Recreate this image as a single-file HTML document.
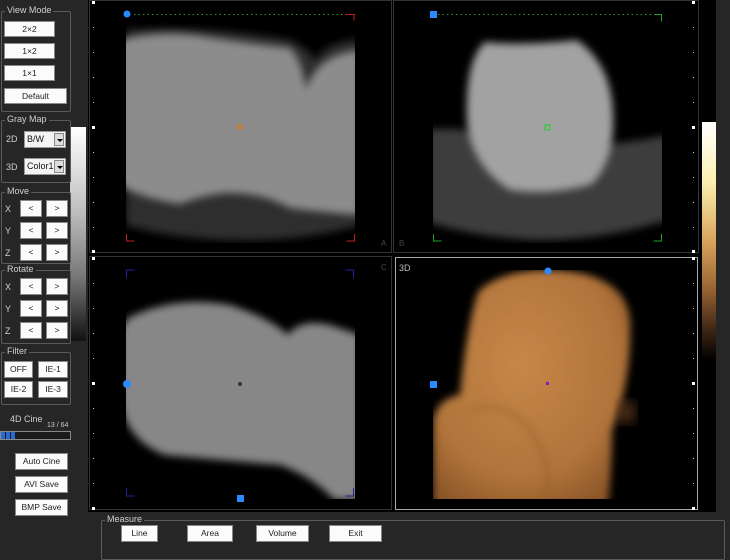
<!DOCTYPE html>
<html><head><meta charset="utf-8"><style>
*{margin:0;padding:0;box-sizing:border-box}
body{width:730px;height:546px;background:#262626;position:relative;overflow:hidden;font-family:"Liberation Sans",sans-serif;font-size:9px;color:#d8d8d8}
.a{position:absolute}
.fs{position:absolute;border:1px solid #5a5a5a;border-radius:2px}
.lg{position:absolute;top:-7px;left:3px;background:#262626;padding:0 2px;font-size:9px;color:#d0d0d0}
.b{position:absolute;background:#fbfbfb;border:1px solid #888;color:#222;font-size:8.5px;text-align:center;line-height:14px}
.sel{position:absolute;background:#f4f4f4;border:1px solid #999;color:#111;font-size:9px;line-height:15px;padding-left:2px}
.sel i{position:absolute;right:1px;top:1px;width:10px;height:13px;background:#ddd;border:1px solid #888}
.sel i:after{content:"";position:absolute;left:2px;top:5px;border:3px solid transparent;border-top:3px solid #000}
.lbl{position:absolute;font-size:9px;color:#cfcfcf}
</style></head><body>
<div class="a" style="left:88px;top:0;width:628px;height:512px;background:#000"></div>
<div class="a" style="left:702px;top:122px;width:14px;height:238px;background:linear-gradient(#fff 0%,#fbf0b0 25%,#d9a45c 50%,#9a6432 70%,#3a2414 88%,#000 100%)"></div>
<div class="a" style="left:70px;top:127px;width:16px;height:214px;background:linear-gradient(#fff,#bdbdbd 40%,#777 70%,#111)"></div>

<svg class="a" style="left:0;top:0" width="730" height="546">
<defs>
<filter id="bl" x="-10%" y="-10%" width="120%" height="120%"><feGaussianBlur stdDeviation="4"/></filter>
<filter id="bl2"><feGaussianBlur stdDeviation="6"/></filter>
<radialGradient id="og" cx="0.45" cy="0.4" r="0.7"><stop offset="0" stop-color="#c68848"/><stop offset="0.7" stop-color="#b0733a"/><stop offset="1" stop-color="#8a5528"/></radialGradient>
<clipPath id="c1"><rect x="126" y="14" width="229" height="229"/></clipPath>
<clipPath id="c2"><rect x="433" y="14" width="229" height="229"/></clipPath>
<clipPath id="c3"><rect x="126" y="270" width="229" height="229"/></clipPath>
<clipPath id="c4"><rect x="433" y="270" width="229" height="229"/></clipPath>
</defs>
<rect x="89.5" y="0.5" width="302" height="252" fill="none" stroke="#333"/>
<rect x="393.5" y="0.5" width="305" height="252" fill="none" stroke="#333"/>
<rect x="89.5" y="256.5" width="302" height="253" fill="none" stroke="#333"/>
<rect x="395.5" y="257.5" width="302" height="252" fill="none" stroke="#aaa"/>

<g clip-path="url(#c1)">
<path d="M126 30 Q200 25 290 40 Q310 50 315 60 Q330 40 360 40 L360 225 Q300 242 230 240 Q170 238 126 225Z" fill="#2e2e2e" filter="url(#bl)"/>
<path d="M120 40 Q160 30 200 36 Q250 44 290 48 Q302 60 306 90 Q316 55 360 50 L360 215 Q320 212 290 208 Q260 192 225 193 Q200 196 180 204 Q140 198 120 185Z" fill="#8c8c8c" filter="url(#bl)"/>
</g>
<circle cx="240" cy="127" r="3" fill="#c08040"/>
<line x1="134" y1="14.5" x2="355" y2="14.5" stroke="#2a9a2a" stroke-dasharray="1.5 3"/>
<circle cx="127" cy="14" r="3.5" fill="#2a8aff"/>
<path d="M345 14.5h9v6M126.5 234v7h8M354.5 234v7h-8" stroke="#c02020" fill="none"/>

<g clip-path="url(#c2)">
<path d="M428 130 Q470 125 520 145 Q600 150 668 135 L668 220 Q600 240 540 240 Q480 238 428 222Z" fill="#3c3c3c" filter="url(#bl)"/>
<path d="M485 42 Q520 46 577 40 Q612 65 613 115 Q615 160 592 184 Q550 196 510 190 Q470 165 467 120 Q465 60 485 42Z" fill="#a2a2a2" filter="url(#bl)"/>
</g>
<rect x="545" y="125" width="5" height="5" fill="none" stroke="#2c2"/>
<line x1="438" y1="14.5" x2="662" y2="14.5" stroke="#2a9a2a" stroke-dasharray="1.5 3"/>
<rect x="430" y="11" width="7" height="7" fill="#2a8aff"/>
<path d="M654 14.5h7.5v7M433.5 234v7h8M661.5 234v7h-8" stroke="#20a020" fill="none"/>

<g clip-path="url(#c3)">
<path d="M128 318 Q175 295 230 305 Q270 318 288 335 Q300 318 330 325 L360 335 L360 500 L335 500 Q310 475 280 465 Q220 460 165 455 Q126 440 120 400 L120 330Z" fill="#878787" filter="url(#bl)"/>
</g>
<circle cx="240" cy="384" r="2" fill="#333"/>
<circle cx="127" cy="384" r="4" fill="#2a8aff"/>
<rect x="237" y="495" width="7" height="7" fill="#2a8aff"/>
<path d="M126.5 278v-8h8M353.5 278v-8h-8M126.5 488v8h8M353.5 488v8h-8" stroke="#2020a0" fill="none"/>

<g clip-path="url(#c4)">
<path d="M433 420 Q438 398 460 395 Q466 330 478 292 Q500 270 550 270 Q625 272 630 320 Q632 380 612 430 Q612 470 608 505 L433 505Z" fill="url(#og)" filter="url(#bl)"/>
<path d="M470 410 Q505 398 530 430 Q555 465 545 500" stroke="#8a5628" stroke-width="3" fill="none" opacity="0.6" filter="url(#bl)"/>
</g>
<ellipse cx="626" cy="412" rx="10" ry="12" fill="#6a4020" filter="url(#bl2)" opacity="0.7"/>
<circle cx="548" cy="271" r="3.5" fill="#2a8aff"/>
<rect x="430" y="381" width="7" height="7" fill="#2a8aff"/>
<rect x="546" y="382" width="3" height="3" fill="#8020c0"/>
<text x="399" y="271" font-family="Liberation Sans" font-size="9" fill="#bbb">3D</text>
<text x="381" y="246" font-family="Liberation Sans" font-size="8" fill="#444">A</text>
<text x="399" y="246" font-family="Liberation Sans" font-size="8" fill="#444">B</text>
<text x="381" y="270" font-family="Liberation Sans" font-size="8" fill="#444">C</text>
<g fill="#fff">
<rect x="92" y="1" width="3" height="3"/><rect x="92" y="126" width="3" height="3"/><rect x="92" y="250" width="3" height="3"/><rect x="92" y="257" width="3" height="3"/><rect x="92" y="382" width="3" height="3"/><rect x="92" y="507" width="3" height="3"/>
<rect x="692" y="1" width="3" height="3"/><rect x="692" y="126" width="3" height="3"/><rect x="692" y="250" width="3" height="3"/><rect x="692" y="257" width="3" height="3"/><rect x="692" y="382" width="3" height="3"/><rect x="692" y="507" width="3" height="3"/>
</g>
<g fill="#ccc">
<rect x="93" y="27" width="1" height="1"/><rect x="93" y="52" width="1" height="1"/><rect x="93" y="77" width="1" height="1"/><rect x="93" y="102" width="1" height="1"/><rect x="93" y="152" width="1" height="1"/><rect x="93" y="177" width="1" height="1"/><rect x="93" y="202" width="1" height="1"/><rect x="93" y="227" width="1" height="1"/>
<rect x="93" y="283" width="1" height="1"/><rect x="93" y="308" width="1" height="1"/><rect x="93" y="333" width="1" height="1"/><rect x="93" y="358" width="1" height="1"/><rect x="93" y="408" width="1" height="1"/><rect x="93" y="433" width="1" height="1"/><rect x="93" y="458" width="1" height="1"/><rect x="93" y="483" width="1" height="1"/>
<rect x="693" y="27" width="1" height="1"/><rect x="693" y="52" width="1" height="1"/><rect x="693" y="77" width="1" height="1"/><rect x="693" y="102" width="1" height="1"/><rect x="693" y="152" width="1" height="1"/><rect x="693" y="177" width="1" height="1"/><rect x="693" y="202" width="1" height="1"/><rect x="693" y="227" width="1" height="1"/>
<rect x="693" y="283" width="1" height="1"/><rect x="693" y="308" width="1" height="1"/><rect x="693" y="333" width="1" height="1"/><rect x="693" y="358" width="1" height="1"/><rect x="693" y="408" width="1" height="1"/><rect x="693" y="433" width="1" height="1"/><rect x="693" y="458" width="1" height="1"/><rect x="693" y="483" width="1" height="1"/>
</g>
</svg>

<div class="fs" style="left:1px;top:11px;width:70px;height:101px"><span class="lg">View Mode</span></div>
<div class="b" style="left:4px;top:21px;width:51px;height:16px">2×2</div>
<div class="b" style="left:4px;top:43px;width:51px;height:16px">1×2</div>
<div class="b" style="left:4px;top:65px;width:51px;height:16px">1×1</div>
<div class="b" style="left:4px;top:88px;width:63px;height:16px">Default</div>

<div class="fs" style="left:1px;top:120px;width:70px;height:63px"><span class="lg">Gray Map</span></div>
<span class="lbl" style="left:6px;top:134px">2D</span>
<div class="sel" style="left:24px;top:131px;width:42px;height:17px">B/W<i></i></div>
<span class="lbl" style="left:6px;top:162px">3D</span>
<div class="sel" style="left:24px;top:158px;width:42px;height:17px">Color1<i></i></div>

<div class="fs" style="left:1px;top:192px;width:70px;height:72px"><span class="lg">Move</span></div>
<span class="lbl" style="left:5px;top:204px">X</span><div class="b" style="left:20px;top:200px;width:22px;height:17px">&lt;</div><div class="b" style="left:46px;top:200px;width:22px;height:17px">&gt;</div>
<span class="lbl" style="left:5px;top:226px">Y</span><div class="b" style="left:20px;top:222px;width:22px;height:17px">&lt;</div><div class="b" style="left:46px;top:222px;width:22px;height:17px">&gt;</div>
<span class="lbl" style="left:5px;top:248px">Z</span><div class="b" style="left:20px;top:244px;width:22px;height:17px">&lt;</div><div class="b" style="left:46px;top:244px;width:22px;height:17px">&gt;</div>

<div class="fs" style="left:1px;top:270px;width:70px;height:74px"><span class="lg">Rotate</span></div>
<span class="lbl" style="left:5px;top:282px">X</span><div class="b" style="left:20px;top:278px;width:22px;height:17px">&lt;</div><div class="b" style="left:46px;top:278px;width:22px;height:17px">&gt;</div>
<span class="lbl" style="left:5px;top:304px">Y</span><div class="b" style="left:20px;top:300px;width:22px;height:17px">&lt;</div><div class="b" style="left:46px;top:300px;width:22px;height:17px">&gt;</div>
<span class="lbl" style="left:5px;top:326px">Z</span><div class="b" style="left:20px;top:322px;width:22px;height:17px">&lt;</div><div class="b" style="left:46px;top:322px;width:22px;height:17px">&gt;</div>

<div class="fs" style="left:1px;top:352px;width:70px;height:53px"><span class="lg">Filter</span></div>
<div class="b" style="left:4px;top:361px;width:29px;height:17px">OFF</div>
<div class="b" style="left:38px;top:361px;width:30px;height:17px">IE-1</div>
<div class="b" style="left:4px;top:381px;width:29px;height:17px">IE-2</div>
<div class="b" style="left:38px;top:381px;width:30px;height:17px">IE-3</div>

<span class="lbl" style="left:10px;top:414px">4D Cine</span>
<span class="a" style="left:47px;top:422px;font-size:7px;color:#ccc">13 / 64</span>
<div class="a" style="left:0;top:431px;width:71px;height:9px;border:1px solid #888;background:#1a1a1a"></div>
<div class="a" style="left:1px;top:432px;width:4px;height:7px;background:#2a6ad0"></div>
<div class="a" style="left:6px;top:432px;width:4px;height:7px;background:#2a6ad0"></div>
<div class="a" style="left:11px;top:432px;width:4px;height:7px;background:#2a6ad0"></div>

<div class="b" style="left:15px;top:453px;width:53px;height:17px">Auto Cine</div>
<div class="b" style="left:15px;top:476px;width:53px;height:17px">AVI Save</div>
<div class="b" style="left:15px;top:499px;width:53px;height:17px">BMP Save</div>

<div class="fs" style="left:101px;top:520px;width:624px;height:40px"><span class="lg">Measure</span></div>
<div class="b" style="left:121px;top:525px;width:37px;height:17px">Line</div>
<div class="b" style="left:187px;top:525px;width:46px;height:17px">Area</div>
<div class="b" style="left:256px;top:525px;width:53px;height:17px">Volume</div>
<div class="b" style="left:329px;top:525px;width:53px;height:17px">Exit</div>
</body></html>
